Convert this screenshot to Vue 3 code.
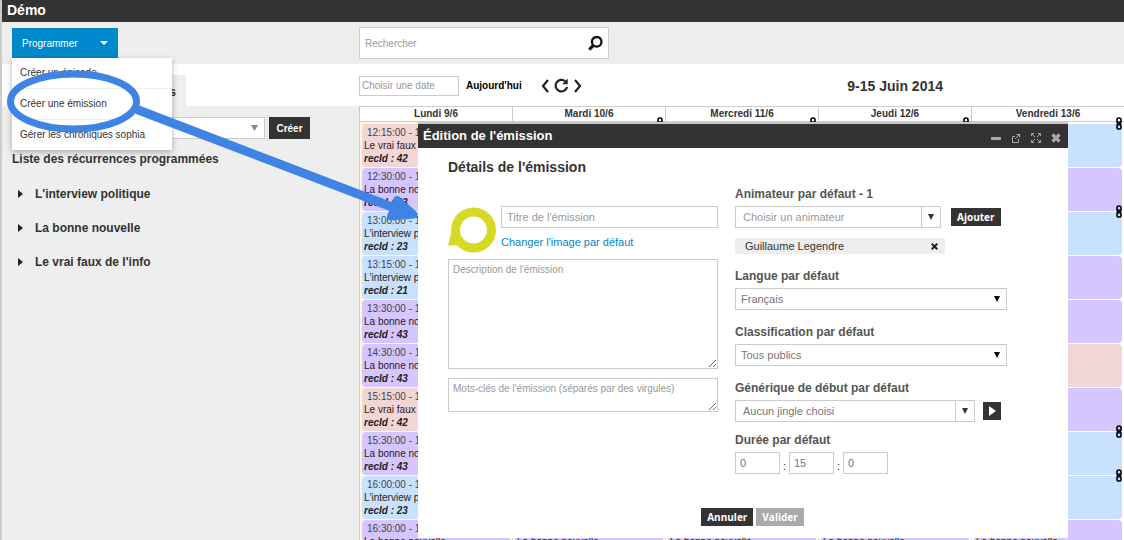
<script setup>
import { ref } from 'vue'

const menu = ['Créer un épisode', 'Créer une émission', 'Gérer les chroniques sophia']
const recurrences = ["L'interview politique", 'La bonne nouvelle', "Le vrai faux de l'info"]

const shows = {
  V: { title: "Le vrai faux de l'info", tone: 'pink', id: 42 },
  B: { title: 'La bonne nouvelle', tone: 'purple', id: 43 },
  I: { title: "L'interview politique", tone: 'blue', id: 23 },
  J: { title: "L'interview politique", tone: 'blue', id: 21 },
}
const slots = [
  '12:15:00 - 12:17:00', '12:30:00 - 12:32:00', '13:00:00 - 13:10:00', '13:15:00 - 13:25:00',
  '13:30:00 - 13:32:00', '14:30:00 - 14:32:00', '15:15:00 - 15:17:00', '15:30:00 - 15:32:00',
  '16:00:00 - 16:10:00', '16:30:00 - 16:32:00',
]
const makeDay = (name, keys, linked, today = false) => ({
  name,
  today,
  events: slots.map((time, i) => ({ time, ...shows[keys[i]], linked: linked.includes(i) })),
})
const days = [
  makeDay('Lundi 9/6', 'VBIJBBVBIB', [], true),
  makeDay('Mardi 10/6', 'IBIBBVBIIB', [0]),
  makeDay('Mercredi 11/6', 'IBIBBVBIIB', [0]),
  makeDay('Jeudi 12/6', 'IBIBBVBIIB', [0]),
  makeDay('Vendredi 13/6', 'IBIBBVBIIB', [0, 2, 7, 8]),
]

const langue = ref('Français')
const classification = ref('Tous publics')
const heures = ref('0')
const minutes = ref('15')
const secondes = ref('0')
</script>

<template>
  <div class="app">
    <header class="topbar"><h1>Démo</h1></header>

    <div class="toolbar">
      <div class="program">
        <button class="program-btn" type="button">
          Programmer
          <svg width="8" height="4" viewBox="0 0 8 4"><path d="M0 0h8L4 4z" fill="#fff" /></svg>
        </button>
        <ul class="menu">
          <li v-for="item in menu" :key="item"><a href="#">{{ item }}</a></li>
        </ul>
      </div>
      <form class="search" @submit.prevent>
        <input type="text" placeholder="Rechercher" aria-label="Rechercher" />
        <button type="submit" aria-label="Lancer la recherche">
          <svg width="15" height="15" viewBox="0 0 15 15" fill="none" stroke="#111">
            <circle cx="8.7" cy="5.8" r="4.8" stroke-width="2.3" />
            <path d="M5.4 9.400 1.2 13.6" stroke-width="3" />
          </svg>
        </button>
      </form>
    </div>

    <div class="main">
      <aside class="side">
        <div class="tabs"><span class="tab">Récurrences</span></div>
        <div class="create">
          <div class="pick side-pick">
            <select aria-label="Émission"><option></option></select>
            <svg width="7" height="6" viewBox="0 0 7 6"><path d="M0 0h7L3.500 6z" fill="#888" /></svg>
          </div>
          <button class="dark create-btn" type="button">Créer</button>
        </div>
        <h2>Liste des récurrences programmées</h2>
        <ul class="recs">
          <li v-for="r in recurrences" :key="r">
            <svg width="5" height="8" viewBox="0 0 5 8"><path d="M0 0 5 4 0 8z" fill="#222" /></svg>
            {{ r }}
          </li>
        </ul>
      </aside>

      <section class="calendar">
        <div class="cal-bar">
          <input class="date" type="text" placeholder="Choisir une date" aria-label="Choisir une date" />
          <button class="today-btn" type="button">Aujourd'hui</button>
          <div class="nav">
            <button type="button" aria-label="Semaine précédente">
              <svg width="8" height="14" viewBox="0 0 8 14"><path d="M7 1 2 7l5 6" fill="none" stroke="#222" stroke-width="2.200" /></svg>
            </button>
            <button type="button" aria-label="Actualiser">
              <svg width="15" height="15" viewBox="0 0 15 15">
                <path d="M11.300 3.300A5.800 5.800 0 1 0 13.100 9" fill="none" stroke="#222" stroke-width="2.200" />
                <path d="M13.700 .6v5.600H8.300z" fill="#222" />
              </svg>
            </button>
            <button type="button" aria-label="Semaine suivante">
              <svg width="8" height="14" viewBox="0 0 8 14"><path d="M1 1l5 6-5 6" fill="none" stroke="#222" stroke-width="2.200" /></svg>
            </button>
          </div>
          <h2>9-15 Juin 2014</h2>
        </div>
        <table>
          <thead>
            <tr><th v-for="d in days" :key="d.name" scope="col">{{ d.name }}</th></tr>
          </thead>
          <tbody>
            <tr>
              <td v-for="d in days" :key="d.name" :class="{ today: d.today }">
                <article v-for="e in d.events" :key="e.time" class="event" :class="e.tone">
                  <time>{{ e.time }}</time>
                  <span>{{ e.title }}</span>
                  <em>recId : {{ e.id }}</em>
                  <svg v-if="e.linked" class="chain" width="6" height="13" viewBox="0 0 6 13" fill="none" stroke="#000" stroke-width="1.600">
                    <rect x="1" y="1" width="4" height="5.300" rx="1.800" />
                    <rect x="1" y="6.700" width="4" height="5.300" rx="1.800" />
                    <path d="M3 4v5" stroke-width="1.200" />
                  </svg>
                </article>
              </td>
            </tr>
          </tbody>
        </table>
      </section>
    </div>

    <section class="modal" role="dialog" aria-labelledby="dlg-title">
      <header class="modal-head">
        <h2 id="dlg-title">Édition de l'émission</h2>
        <div class="win">
          <button type="button" aria-label="Réduire">
            <svg width="10" height="10" viewBox="0 0 10 10"><path d="M0 4h10v3H0z" fill="#aaa" /></svg>
          </button>
          <button type="button" aria-label="Détacher">
            <svg width="10" height="10" viewBox="0 0 10 10" fill="none" stroke="#aaa">
              <path d="M4 3.500H1.500v6h6V6M5.500 1.500h3v3M8.500 1.500 4 6" />
            </svg>
          </button>
          <button type="button" aria-label="Agrandir">
            <svg width="10" height="10" viewBox="0 0 10 10" fill="none" stroke="#aaa">
              <path d="M.5 3V.5H3M7 .5h2.500V3M9.500 7v2.500H7M3 9.500H.5V7M1 1l3 3M9 1 6 4M9 9 6 6M1 9l3-3" />
            </svg>
          </button>
          <button type="button" aria-label="Fermer">
            <svg width="10" height="10" viewBox="0 0 10 10"><path d="M1.500 1.500l7 7M8.500 1.500l-7 7" stroke="#aaa" stroke-width="3.200" /></svg>
          </button>
        </div>
      </header>

      <form class="modal-body" @submit.prevent>
        <h3>Détails de l'émission</h3>
        <div class="cols">
          <div class="left">
            <div class="identity">
              <svg class="logo" width="49" height="47" viewBox="0 0 49 47">
                <circle cx="25.500" cy="24" r="18" fill="#fff" stroke="#d6da27" stroke-width="9" />
                <path d="M3 27 11 29 12.500 34 16 39 0 39.500z" fill="#d6da27" />
              </svg>
              <div class="identity-fields">
                <input class="field" type="text" placeholder="Titre de l'émission" aria-label="Titre de l'émission" />
                <a href="#">Changer l'image par défaut</a>
              </div>
            </div>
            <textarea class="desc" placeholder="Description de l'émission" aria-label="Description de l'émission"></textarea>
            <textarea class="tags" placeholder="Mots-clés de l'émission (séparés par des virgules)" aria-label="Mots-clés"></textarea>
          </div>

          <div class="right">
            <div class="group">
              <label for="anim">Animateur par défaut - 1</label>
              <div class="row row-anim">
                <div class="combo">
                  <input id="anim" type="text" placeholder="Choisir un animateur" />
                  <button type="button" aria-label="Ouvrir la liste">
                    <svg width="6" height="6" viewBox="0 0 6 6"><path d="M0 0h6L3 6z" fill="#333" /></svg>
                  </button>
                </div>
                <button class="dark small" type="button">Ajouter</button>
              </div>
              <div class="chip">
                Guillaume Legendre
                <button type="button" aria-label="Retirer">
                  <svg width="7" height="7" viewBox="0 0 7 7"><path d="M.7.7l5.600 5.600M6.300.7.7 6.300" stroke="#222" stroke-width="2" /></svg>
                </button>
              </div>
            </div>
            <div class="group">
              <label for="langue">Langue par défaut</label>
              <div class="pick">
                <select id="langue" v-model="langue"><option>Français</option></select>
                <svg width="6" height="6" viewBox="0 0 6 6"><path d="M0 0h6L3 6z" fill="#000" /></svg>
              </div>
            </div>
            <div class="group">
              <label for="classif">Classification par défaut</label>
              <div class="pick">
                <select id="classif" v-model="classification"><option>Tous publics</option></select>
                <svg width="6" height="6" viewBox="0 0 6 6"><path d="M0 0h6L3 6z" fill="#000" /></svg>
              </div>
            </div>
            <div class="group">
              <label for="jingle">Générique de début par défaut</label>
              <div class="row row-jingle">
                <div class="combo jingle">
                  <input id="jingle" type="text" value="Aucun jingle choisi" />
                  <button type="button" aria-label="Ouvrir la liste">
                    <svg width="6" height="6" viewBox="0 0 6 6"><path d="M0 0h6L3 6z" fill="#333" /></svg>
                  </button>
                </div>
                <button class="dark play" type="button" aria-label="Écouter">
                  <svg width="7" height="10" viewBox="0 0 7 10"><path d="M0 0l7 5-7 5z" fill="#fff" /></svg>
                </button>
              </div>
            </div>
            <div class="group">
              <label for="heures">Durée par défaut</label>
              <div class="row duration">
                <input id="heures" v-model="heures" type="text" /><i>:</i>
                <input v-model="minutes" type="text" aria-label="Minutes" /><i>:</i>
                <input v-model="secondes" type="text" aria-label="Secondes" />
              </div>
            </div>
          </div>
        </div>
        <footer>
          <button class="dark small" type="button">Annuler</button>
          <button class="dark small off" type="submit" disabled>Valider</button>
        </footer>
      </form>
    </section>

    <svg class="pointer" width="430" height="240" viewBox="0 0 430 240" fill="none" stroke="#3f84e4" aria-hidden="true">
      <ellipse cx="73.500" cy="101.500" rx="63" ry="27.500" stroke-width="7" />
      <path d="M137 109.500 392 207" stroke-width="9" />
      <path d="M397 200 413.500 214.500 391 216.500z" fill="#3f84e4" stroke-width="8" stroke-linejoin="round" />
    </svg>
  </div>
</template>

<style>
body { margin: 0; }
</style>

<style scoped>
* { box-sizing: border-box; }
.app {
  position: relative;
  display: flex;
  flex-direction: column;
  height: 100vh;
  overflow: hidden;
  border-left: 2px solid #ccc;
  background: #fff;
  color: #333;
  font: 10px/13px "Liberation Sans", Arial, sans-serif;
}
h1, h2, h3, ul, p { margin: 0; padding: 0; }
ul { list-style: none; }
svg { display: block; flex: none; }
button, input, select, textarea { font: inherit; color: inherit; margin: 0; border-radius: 0; }
button { border: 0; padding: 0; background: none; cursor: pointer; }
input, select, textarea { outline: 0; }
::placeholder { color: #999; opacity: 1; }

.topbar { flex: none; height: 22px; background: #333; color: #fff; padding-left: 5px; }
.topbar h1 { font-size: 14px; line-height: 20px; }
.toolbar { flex: none; display: flex; align-items: center; height: 42px; background: #eee; }
.program { position: relative; width: 357px; padding-left: 10px; }
.program-btn {
  display: flex; align-items: center; justify-content: space-between;
  width: 106px; height: 30px; padding: 0 10px; background: #0088cc; color: #fff;
}
.menu {
  position: absolute; z-index: 5; left: 10px; top: 30px; width: 160px;
  background: #fff; box-shadow: 0 2px 6px rgba(0, 0, 0, .3);
}
.menu li + li { border-top: 1px solid #eee; }
.menu a { display: block; padding: 0 8px; line-height: 30px; color: #333; text-decoration: none; }
.search { display: flex; align-items: center; width: 250px; height: 32px; border: 1px solid #ccc; background: #fff; padding: 0 5px; }
.search input { flex: 1; min-width: 0; border: 0; padding: 0; background: none; }

.main { flex: 1; min-height: 0; display: grid; grid-template-columns: 357px 1fr; }
.side { background: #eee; }
.tabs { display: flex; align-items: flex-end; height: 42px; padding-left: 80px; background: #fff; }
.tab { width: 104px; height: 31px; padding-right: 10px; background: #eee; text-align: right; font-weight: bold; font-size: 12px; line-height: 34px; }
.create { display: flex; gap: 4px; padding: 11px 0 0 10px; }
.pick { position: relative; display: flex; align-items: center; height: 22px; }
.pick select { appearance: none; width: 100%; height: 100%; padding: 0 5px; border: 1px solid #ccc; background: #fff; color: #777; }
.pick svg { position: absolute; right: 7px; pointer-events: none; }
.side-pick { width: 253px; }
.dark { background: #333; color: #fff; }
.create-btn { width: 41px; height: 22px; font-weight: bold; }
.side h2 { padding: 12px 0 0 10px; font-size: 12px; line-height: 16px; }
.recs { padding-top: 10px; }
.recs li { display: flex; align-items: center; gap: 12px; height: 34px; padding-left: 16px; font-size: 12px; font-weight: bold; }

.calendar { min-width: 0; background: #fff; }
.cal-bar { display: flex; align-items: center; height: 42px; padding-top: 1px; }
.date { width: 100px; height: 20px; padding: 0 2px; border: 1px solid #ccc; }
.today-btn { margin-left: 7px; font-weight: bold; color: #000; }
.nav { display: flex; align-items: center; gap: 5px; margin-left: 19px; }
.cal-bar h2 { margin: 0 181px 0 auto; font-size: 14px; line-height: 16px; white-space: nowrap; }
table { width: 100%; table-layout: fixed; border-collapse: separate; border-spacing: 0; }
th { height: 16px; padding: 0; border: solid #ccc; border-width: 1px 0 1px 1px; line-height: 14px; font-weight: bold; }
td { padding: 2px 2px 0; border-left: 1px solid #ccc; vertical-align: top; }
td.today { background: #fff8dc; }
.event { position: relative; height: 43px; margin-bottom: 1px; padding: 2px; border-radius: 4px; white-space: nowrap; }
.event > time, .event > span, .event > em { display: block; }
.event time { padding-left: 3px; color: #444; }
.event span { color: #222; }
.event em { font-weight: bold; color: #222; }
.pink { background: #f2d5d5; }
.purple { background: #d5c6ff; }
.blue { background: #c8e1ff; }
.chain { position: absolute; z-index: 1; top: -7px; right: 0; }

.modal { position: absolute; z-index: 6; left: 416px; top: 122px; width: 650px; border-top: 2px solid #c8c8c8; background: #fff; }
.modal-head { display: flex; align-items: center; justify-content: space-between; height: 24px; padding: 0 7px 0 5px; background: #333; color: #fff; }
.modal-head h2 { font-size: 13px; line-height: 16px; }
.win { display: flex; gap: 10px; padding-top: 3px; }
.modal-body { padding: 9px 61px 12px 30px; }
.modal-body h3 { font-size: 14px; line-height: 20px; }
.cols { display: grid; grid-template-columns: 270px 1fr; column-gap: 17px; padding-top: 9px; }
.left { padding-top: 20px; }
.identity { display: flex; gap: 4px; height: 53px; }
.identity-fields { flex: 1; min-width: 0; font-size: 11px; }
.identity a { display: block; margin-top: 8px; color: #0088cc; text-decoration: none; }
.field { display: block; width: 100%; height: 22px; padding: 0 5px; border: 1px solid #ccc; }
textarea { display: block; width: 100%; padding: 3px 4px; border: 1px solid #ccc; resize: both; color: #777; }
.desc { height: 110px; }
.tags { height: 34px; margin-top: 9px; }
.group { margin-bottom: 14px; font-size: 11px; }
.group:nth-last-child(2) { margin-bottom: 10px; }
.group:last-child { margin-bottom: 0; }
label { display: block; margin-bottom: 4px; color: #555; font-size: 12px; line-height: 16px; font-weight: bold; }
.row { display: flex; align-items: center; }
.row-anim { gap: 10px; }
.row-jingle { gap: 8px; }
.combo { display: flex; width: 206px; height: 22px; border: 1px solid #ccc; }
.combo.jingle { width: 240px; }
.combo input { flex: 1; min-width: 0; padding: 0 7px; border: 0; color: #777; }
.combo button { display: flex; align-items: center; justify-content: center; width: 19px; border-left: 1px solid #ccc; }
.small { height: 18px; padding: 0 6px; font: bold 10px/18px "Open Sans", sans-serif; }
.off { background: #aaa; }
.chip { display: flex; align-items: center; justify-content: space-between; width: 210px; height: 16px; margin-top: 10px; padding: 0 7px 0 10px; background: #eee; }
.play { display: flex; align-items: center; justify-content: center; width: 18px; height: 18px; }
.duration input { width: 45px; height: 22px; padding: 0 4px; border: 1px solid #ccc; color: #777; }
.duration i { width: 9px; padding-top: 6px; text-align: center; font-style: normal; }
footer { display: flex; justify-content: center; gap: 3px; padding: 34px 0 0 50px; }

.pointer { position: absolute; z-index: 7; left: -2px; top: 0; pointer-events: none; }
</style>
